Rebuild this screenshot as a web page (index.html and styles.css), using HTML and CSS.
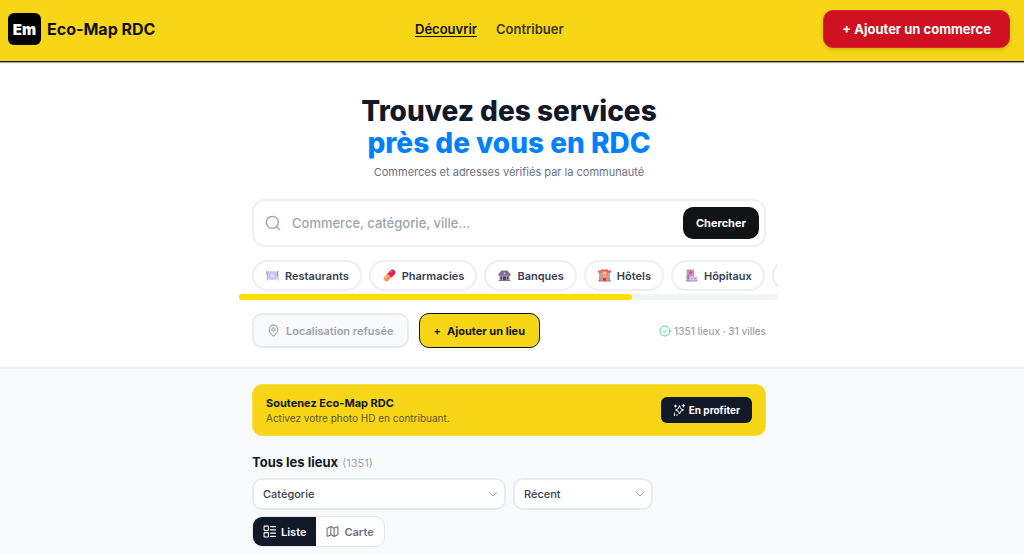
FILE: index.html
```html
<!DOCTYPE html>
<html lang="fr">
<head>
    <meta charset="UTF-8">
    <meta name="viewport" content="width=device-width, initial-scale=1.0">
    <title>Eco-Map RDC</title>
    <link rel="stylesheet" href="styles.css">
</head>
<body>
    <header class="navbar">
        <a class="brand" href="#">
            <span class="brand-logo" aria-hidden="true">Em</span>
            <span>Eco-Map RDC</span>
        </a>
        <nav class="nav-links">
            <a class="active" href="#">Découvrir</a>
            <a href="#">Contribuer</a>
        </nav>
        <button class="btn-commerce" type="button">+ Ajouter un commerce</button>
    </header>

    <section class="hero">
        <div class="container">
            <h1>Trouvez des services<br><span>près de vous en RDC</span></h1>
            <p class="subtitle">Commerces et adresses vérifiés par la communauté</p>

            <form class="search">
                <svg class="icon" width="16" height="16" viewBox="0 0 24 24"><circle cx="11" cy="11" r="9"/><path d="m22 22-4.500-4.500"/></svg>
                <input type="search" aria-label="Rechercher un lieu" placeholder="Commerce, catégorie, ville...">
                <button type="button">Chercher</button>
            </form>

            <div class="chips-wrap">
                <div class="chips">
                    <button class="chip" type="button">
                        <svg width="13" height="13" viewBox="0 0 26 26">
                            <rect x="3" y="4" width="20" height="18" rx="5" fill="#d9cdf3"/>
                            <circle cx="13" cy="13" r="7" fill="#cbbcf0"/>
                            <circle cx="13" cy="13" r="4.500" fill="#e0d6f7"/>
                            <path d="M1 4v6h3V4M2.500 10v13" fill="none" stroke="#9c8fb0" stroke-width="1.600"/>
                            <path d="M24 23V4q-3 3-2 10h2" fill="#b6a9c8" stroke="#9c8fb0" stroke-width="1.400"/>
                        </svg>
                        Restaurants
                    </button>
                    <button class="chip" type="button">
                        <svg width="13" height="13" viewBox="0 0 26 26">
                            <g transform="rotate(-45 13 13)">
                                <rect x="-1" y="7.500" width="28" height="11" rx="5.500" fill="#f9975d"/>
                                <path d="M13 7.500h8.500a5.500 5.500 0 0 1 0 11H13z" fill="#e3204f"/>
                                <path d="M3 10.500h7" stroke="#ffc38a" stroke-width="2" stroke-linecap="round"/>
                                <path d="M20 10.500h2" stroke="#ff8fb5" stroke-width="2" stroke-linecap="round"/>
                            </g>
                        </svg>
                        Pharmacies
                    </button>
                    <button class="chip" type="button">
                        <svg width="13" height="13" viewBox="0 0 26 26">
                            <path d="M7 3h12l6 7v4H1v-4z" fill="#81738e"/>
                            <path d="M3 13h20v10H3z" fill="#a79bb3"/>
                            <path d="M1 22h24v2H1z" fill="#81738e"/>
                            <path d="M5 15h3v6H5zM18 15h3v6h-3zM10 15h6v7h-6z" fill="#51455e"/>
                            <circle cx="13" cy="9" r="2" fill="#cfc5d8"/>
                        </svg>
                        Banques
                    </button>
                    <button class="chip" type="button">
                        <svg width="13" height="13" viewBox="0 0 26 26">
                            <path d="M2 6h22v18H2z" fill="#8aa6c8"/>
                            <path d="M7 2h12v22H7z" fill="#f58a78"/>
                            <path d="M0 3h8v4H0zM18 3h8v4h-8zM6 1h14v3H6z" fill="#e35d50"/>
                            <path d="M10 6h6v4h-6zM10 12h2v3h-2zM14 12h2v3h-2z" fill="#ffd36d"/>
                            <path d="M10 18h6v6h-6z" fill="#a74448"/>
                            <path d="M2 10h4M2 15h4M20 10h4M20 15h4" stroke="#f3a08c" stroke-width="2"/>
                            <path d="M0 23h26v2H0z" fill="#c06b68"/>
                        </svg>
                        Hôtels
                    </button>
                    <button class="chip" type="button">
                        <svg width="13" height="13" viewBox="0 0 26 26">
                            <path d="M3 1h15v23H3z" fill="#b59cc9"/>
                            <path d="M9 15h16v9H9z" fill="#d8c1ee"/>
                            <path d="M11 3v8M7 7h8" stroke="#e847a5" stroke-width="3"/>
                            <path d="M5 14h3M5 18h3" stroke="#735b88" stroke-width="2"/>
                            <path d="M13 19h3M19 19h3" stroke="#b092cf" stroke-width="2"/>
                            <path d="M1 23h24v2H1z" fill="#a58bbb"/>
                        </svg>
                        Hôpitaux
                    </button>
                    <button class="chip" type="button" aria-label="Plus de catégories">
                        <svg width="13" height="13" viewBox="0 0 26 26"><path d="M2 10 13 3l11 7v14H2z" fill="#f9975d"/></svg>
                    </button>
                </div>
                <div class="scroll-track"><div class="scroll-thumb"></div></div>
            </div>

            <div class="actions">
                <button class="btn-location" type="button" disabled>
                    <svg class="icon" width="13" height="13" viewBox="0 0 24 24"><path d="M20 10c0 5-5.500 10.200-7.400 11.800a1 1 0 0 1-1.200 0C9.500 20.200 4 15 4 10a8 8 0 0 1 16 0"/><circle cx="12" cy="10" r="3"/></svg>
                    Localisation refusée
                </button>
                <button class="btn-place" type="button"><span>+</span>Ajouter un lieu</button>
                <p class="stats">
                    <svg class="icon" width="12" height="12" viewBox="0 0 24 24"><circle cx="12" cy="12" r="10"/><path d="m8.500 12 2.500 2.500 4.500-4.500"/></svg>
                    1351 lieux · 31 villes
                </p>
            </div>
        </div>
    </section>

    <main class="listing">
        <div class="container">
            <div class="banner">
                <div>
                    <h2>Soutenez Eco-Map RDC</h2>
                    <p>Activez votre photo HD en contribuant.</p>
                </div>
                <button type="button">
                    <svg class="icon" width="12" height="12" viewBox="0 0 24 24"><path d="M13 4q1 7 8 8-7 1-8 8-1-7-8-8 7-1 8-8z"/><path d="M21 1v5M18.500 3.500h5M5 2v4M3 4h4M3 18v5M8 21v2"/></svg>
                    En profiter
                </button>
            </div>

            <h2 class="list-title">Tous les lieux <span>(1351)</span></h2>

            <div class="filters">
                <div class="select-box wide">
                    <select aria-label="Catégorie"><option>Catégorie</option></select>
                    <svg class="icon" width="12" height="12" viewBox="0 0 24 24"><path d="m5 9 7 7 7-7"/></svg>
                </div>
                <div class="select-box">
                    <select aria-label="Trier par"><option>Récent</option></select>
                    <svg class="icon" width="12" height="12" viewBox="0 0 24 24"><path d="m5 9 7 7 7-7"/></svg>
                </div>
            </div>

            <div class="view-toggle">
                <button class="selected" type="button">
                    <svg class="icon" width="13" height="13" viewBox="0 0 24 24"><rect x="2" y="2" width="8" height="8" rx="1"/><rect x="2" y="14" width="8" height="8" rx="1"/><path d="M14 3h9M14 9h9M14 15h9M14 21h9"/></svg>
                    Liste
                </button>
                <button type="button">
                    <svg class="icon" width="13" height="13" viewBox="0 0 24 24"><path d="M14.100 5.600a2 2 0 0 0 1.800 0l4.700-2.300A1 1 0 0 1 22 4.200V17a1 1 0 0 1-.6.900l-5.500 2.700a2 2 0 0 1-1.800 0l-4.200-2.200a2 2 0 0 0-1.800 0l-4.700 2.300A1 1 0 0 1 2 19.800V7a1 1 0 0 1 .6-.9l5.500-2.700a2 2 0 0 1 1.800 0zM15 6v15M9 3v15"/></svg>
                    Carte
                </button>
            </div>
        </div>
    </main>
</body>
</html>
```
FILE: styles.css
```css
* {
    box-sizing: border-box;
}

body {
    font-family: 'Inter', sans-serif;
    margin: 0;
    background-color: #f9fafb;
    color: #111827;
}

button, input, select {
    font-family: inherit;
}

button {
    cursor: pointer;
    white-space: nowrap;
}

h1, h2, p {
    margin: 0;
}

.icon {
    fill: none;
    stroke: currentColor;
    stroke-width: 2;
    stroke-linecap: round;
    stroke-linejoin: round;
    flex-shrink: 0;
}

/* Navbar */
.navbar {
    display: flex;
    justify-content: space-between;
    align-items: center;
    padding: 10px 14px 13px 8px;
    background-color: #f7d618;
    border-bottom: 1px solid #111111;
    box-shadow: 0 1px 1px rgba(0, 0, 0, 0.3);
    position: relative;
}

.brand {
    display: flex;
    align-items: center;
    gap: 6px;
    color: #111111;
    font-size: 16px;
    font-weight: 700;
    text-decoration: none;
}

.brand-logo {
    display: flex;
    align-items: center;
    justify-content: center;
    width: 33px;
    height: 32px;
    border-radius: 6px;
    background-color: #000;
    color: #fff;
    font-size: 15px;
    font-weight: 900;
}

.nav-links {
    display: flex;
    gap: 19px;
}

.nav-links a {
    color: #3b3815;
    font-size: 13px;
    font-weight: 600;
    text-decoration: none;
}

.nav-links a.active {
    color: #111111;
    text-decoration: underline;
    text-underline-offset: 2px;
}

.btn-commerce {
    height: 38px;
    padding: 0 18px;
    border: 1px solid #d9262a;
    border-radius: 10px;
    background-color: #ce1020;
    color: #fff;
    font-size: 13px;
    font-weight: 700;
    box-shadow: 0 2px 4px rgba(0, 0, 0, 0.15);
}

/* Hero */
.hero {
    padding: 33px 6px 19px 0;
    background-color: #fff;
    border-bottom: 2px solid #f0f1f5;
}

.container {
    max-width: 514px;
    margin: 0 auto;
}

h1 {
    font-size: 28px;
    font-weight: 800;
    line-height: 32px;
    text-align: center;
}

h1 span {
    color: #007fff;
}

.subtitle {
    margin-top: 4px;
    color: #6b7280;
    font-size: 11px;
    line-height: 18px;
    text-align: center;
}

.search {
    display: flex;
    align-items: center;
    height: 48px;
    margin-top: 18px;
    padding: 0 5px 0 11px;
    border: 2px solid #eeeef3;
    border-radius: 13px;
    color: #9ca3af;
}

.search input {
    flex: 1;
    min-width: 0;
    margin: 0 11px;
    padding: 0;
    border: none;
    outline: none;
    background: none;
    font-size: 13px;
    font-weight: 500;
}

.search input::placeholder {
    color: #9ca3af;
}

.search button {
    height: 32px;
    padding: 0 13px;
    border: none;
    border-radius: 10px;
    background-color: #111214;
    color: #fff;
    font-size: 11px;
    font-weight: 700;
}

.chips-wrap {
    margin: 13px -12px 0 -13px;
    overflow: hidden;
}

.chips {
    display: flex;
    gap: 7px;
    padding: 0 0 3px 13px;
}

.chip {
    display: flex;
    align-items: center;
    flex-shrink: 0;
    gap: 6px;
    height: 31px;
    padding: 0 11px 0 12px;
    border: 2px solid #eeeef3;
    border-radius: 16px;
    background-color: #fff;
    color: #374151;
    font-size: 11px;
    font-weight: 600;
}

.scroll-track {
    height: 6px;
    border-radius: 3px 0 0 3px;
    background-color: #f3f4f6;
}

.scroll-thumb {
    width: 73%;
    height: 6px;
    border-radius: 3px;
    background-color: #ffdd00;
}

.actions {
    display: flex;
    align-items: center;
    gap: 10px;
    margin-top: 13px;
}

.btn-location, .btn-place {
    display: flex;
    align-items: center;
    gap: 6px;
    height: 35px;
    padding: 0 13px;
    border: 2px solid #eaebef;
    border-radius: 10px;
    background-color: #f9fafb;
    color: #9ca3af;
    font-size: 11px;
    font-weight: 600;
}

.btn-place {
    padding: 0 14px;
    border: 1px solid #111111;
    background-color: #f7d618;
    color: #111111;
    font-weight: 700;
}

.stats {
    display: flex;
    align-items: center;
    gap: 3px;
    margin-left: auto;
    color: #9ca3af;
    font-size: 10px;
    font-weight: 500;
}

.stats .icon {
    color: #4ade80;
}

/* Listing */
.listing {
    padding: 15px 6px 8px 0;
}

.banner {
    display: flex;
    align-items: center;
    justify-content: space-between;
    padding: 10px 13px;
    border: 1px solid #f8de48;
    border-radius: 10px;
    background-color: #f7d618;
}

.banner h2 {
    font-size: 11px;
    font-weight: 700;
    line-height: 16px;
}

.banner p {
    color: #5b5528;
    font-size: 10px;
    line-height: 14px;
}

.banner button {
    display: flex;
    align-items: center;
    gap: 4px;
    height: 26px;
    padding: 0 12px;
    border: none;
    border-radius: 6px;
    background-color: #111827;
    color: #fff;
    font-size: 10px;
    font-weight: 700;
}

.list-title {
    margin-top: 17px;
    font-size: 13px;
    font-weight: 700;
    line-height: 18px;
}

.list-title span {
    margin-left: 1px;
    color: #9ca3af;
    font-size: 11px;
    font-weight: 400;
}

.filters {
    display: flex;
    gap: 7px;
    margin: 6px 0;
}

.select-box {
    display: grid;
    align-items: center;
    width: 140px;
}

.select-box.wide {
    width: 254px;
}

.select-box select, .select-box .icon {
    grid-area: 1 / 1;
}

.select-box select {
    appearance: none;
    width: 100%;
    height: 32px;
    padding: 0 9px;
    border: 2px solid #eaebef;
    border-radius: 10px;
    background-color: #fff;
    color: #374151;
    font-size: 11px;
    font-weight: 500;
}

.select-box .icon {
    justify-self: end;
    margin-right: 7px;
    color: #9ca3af;
    pointer-events: none;
}

.view-toggle {
    display: inline-flex;
    height: 31px;
    border: 1px solid #e5e7eb;
    border-radius: 10px;
    background-color: #fff;
    overflow: hidden;
}

.view-toggle button {
    display: flex;
    align-items: center;
    gap: 5px;
    padding: 0 10px;
    border: none;
    background: none;
    color: #6b7280;
    font-size: 11px;
    font-weight: 600;
}

.view-toggle .selected {
    background-color: #111827;
    color: #fff;
}
```
